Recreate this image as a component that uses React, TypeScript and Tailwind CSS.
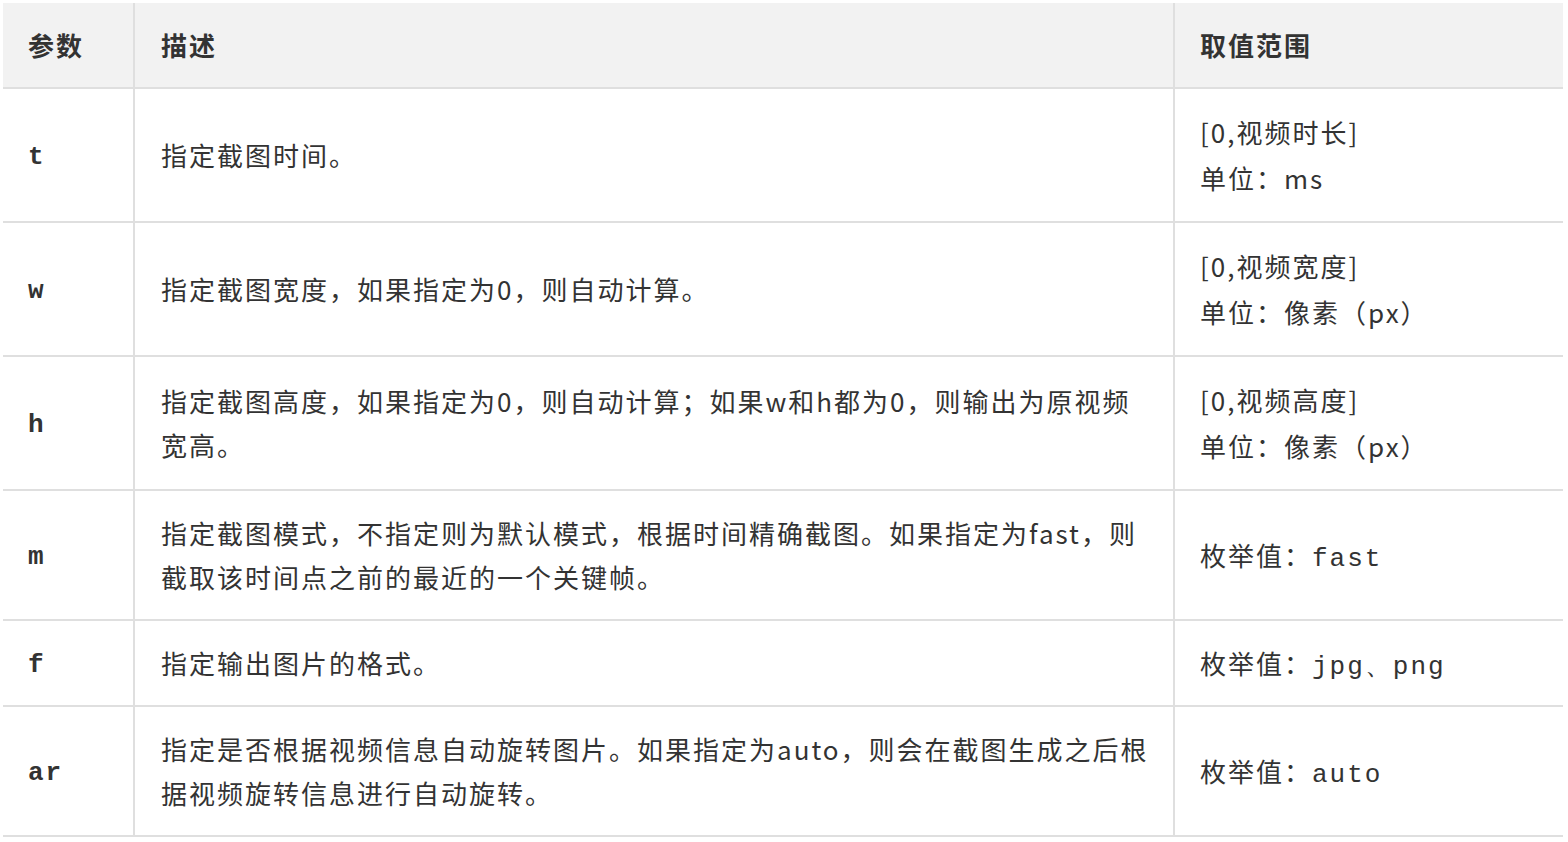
const rows = [
  {
    k: "t",
    desc: ["指定截图时间。"],
    range: ["[0,视频时长]", "单位：ms"],
  },
  {
    k: "w",
    desc: ["指定截图宽度，如果指定为0，则自动计算。"],
    range: ["[0,视频宽度]", "单位：像素（px）"],
  },
  {
    k: "h",
    desc: ["指定截图高度，如果指定为0，则自动计算；如果w和h都为0，则输出为原视频", "宽高。"],
    range: ["[0,视频高度]", "单位：像素（px）"],
  },
  {
    k: "m",
    desc: ["指定截图模式，不指定则为默认模式，根据时间精确截图。如果指定为fast，则", "截取该时间点之前的最近的一个关键帧。"],
    code: "fast",
  },
  {
    k: "f",
    desc: ["指定输出图片的格式。"],
    code: "jpg、png",
  },
  {
    k: "ar",
    desc: ["指定是否根据视频信息自动旋转图片。如果指定为auto，则会在截图生成之后根", "据视频旋转信息进行自动旋转。"],
    code: "auto",
  },
];

const mono = "[font-family:'Liberation_Mono','Courier_New',monospace]";

export default function App() {
  return (
    <div className="min-h-screen bg-white pl-[3px] pt-[3px] text-[#333] [font-family:'Noto_Sans_CJK_SC',sans-serif]">
      <div className="grid w-[1560px] grid-cols-[132px_1040px_388px] text-[26px] leading-[44px] tracking-[2px]">
        <div className="border-b-2 border-r-2 border-[#dfdfdf] bg-[#f2f2f2] py-5 pl-[25px] font-bold">参数</div>
        <div className="border-b-2 border-r-2 border-[#dfdfdf] bg-[#f2f2f2] py-5 pl-[26px] font-bold">描述</div>
        <div className="border-b-2 border-[#dfdfdf] bg-[#f2f2f2] py-5 pl-[25px] font-bold">取值范围</div>

        {rows.map((r) => (
          <div key={r.k} className="contents">
            <div className="flex items-center border-b-2 border-r-2 border-[#dfdfdf] py-5 pl-[25px]">
              <span className={`${mono} pt-1 text-[26px] leading-none font-bold`}>{r.k}</span>
            </div>
            <div className="flex items-center border-b-2 border-r-2 border-[#dfdfdf] py-5 pl-[26px]">
              <div className="whitespace-nowrap">
                {r.desc.map((line) => (
                  <div key={line}>{line}</div>
                ))}
              </div>
            </div>
            <div className="flex items-center border-b-2 border-[#dfdfdf] py-5 pl-[25px]">
              {r.range ? (
                <div className="leading-[46px]">
                  <div>{r.range[0]}</div>
                  <div>{r.range[1]}</div>
                </div>
              ) : (
                <p className="whitespace-nowrap">
                  枚举值：<span className={`${mono} text-[26px] leading-none`}>{r.code}</span>
                </p>
              )}
            </div>
          </div>
        ))}
      </div>
    </div>
  );
}
